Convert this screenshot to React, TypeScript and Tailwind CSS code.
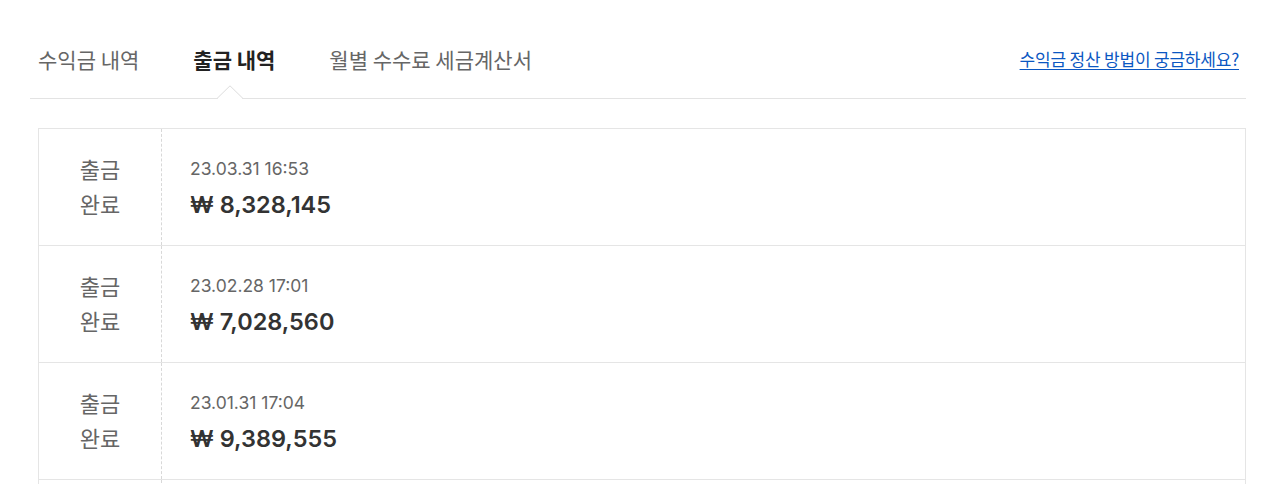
import React from "react";

const rows = [
  { date: "23.03.31 16:53", amount: "8,328,145" },
  { date: "23.02.28 17:01", amount: "7,028,560" },
  { date: "23.01.31 17:04", amount: "9,389,555" },
];

const kr = { fontFamily: '"Noto Sans CJK KR", "Noto Sans", sans-serif' };
const num = { fontFamily: 'Inter, "Noto Sans CJK KR", sans-serif' };

export default function App() {
  return (
    <div className="w-[1280px] h-[484px] overflow-hidden bg-white" style={kr}>
      <div className="ml-[30px] w-[1216px]">
        <div className="relative flex items-end justify-between border-b border-[#e3e3e3] pt-[43px] pb-[23px]">
          <div className="flex items-center pl-[8px] text-[21px] leading-[32px] text-[#666]">
            <span>수익금 내역</span>
            <span className="ml-[54px] font-bold text-[#222]">출금 내역</span>
            <span className="ml-[54px]">월별 수수료 세금계산서</span>
          </div>
          <a
            href="#"
            className="mr-[7px] text-[17px] leading-[32px] text-[#0b57c2] underline underline-offset-[3px] tracking-[-0.2px]"
          >
            수익금 정산 방법이 궁금하세요?
          </a>
          <svg
            className="absolute left-[187px] bottom-[-1px]"
            width="26"
            height="14"
            viewBox="0 0 26 14"
          >
            <polyline
              points="0,13.5 13,0.8 26,13.5"
              fill="#fff"
              stroke="#dcdcdc"
              strokeWidth="1"
            />
            <rect x="1" y="13" width="24" height="2" fill="#fff" />
          </svg>
        </div>
        <div className="ml-[8px] mt-[29px] border border-[#e5e5e5] border-b-0">
          {rows.map((r, i) => (
            <div key={i} className="flex h-[117px] border-b border-[#e5e5e5]">
              <div className="w-[123px] shrink-0 border-r border-dashed border-[#d8d8d8] pt-[22px] text-center text-[22px] leading-[35px] text-[#666]">
                <div>출금</div>
                <div>완료</div>
              </div>
              <div className="pl-[28px] pt-[28px]">
                <div className="text-[17.5px] leading-[24px] text-[#666]" style={num}>
                  {r.date}
                </div>
                <div
                  className="mt-[8px] text-[23.5px] leading-[32px] font-semibold text-[#333]"
                  style={num}
                >
                  ₩ {r.amount}
                </div>
              </div>
            </div>
          ))}
          <div className="flex h-[117px]">
            <div className="w-[123px] shrink-0 border-r border-dashed border-[#d8d8d8]" />
            <div />
          </div>
        </div>
      </div>
    </div>
  );
}
